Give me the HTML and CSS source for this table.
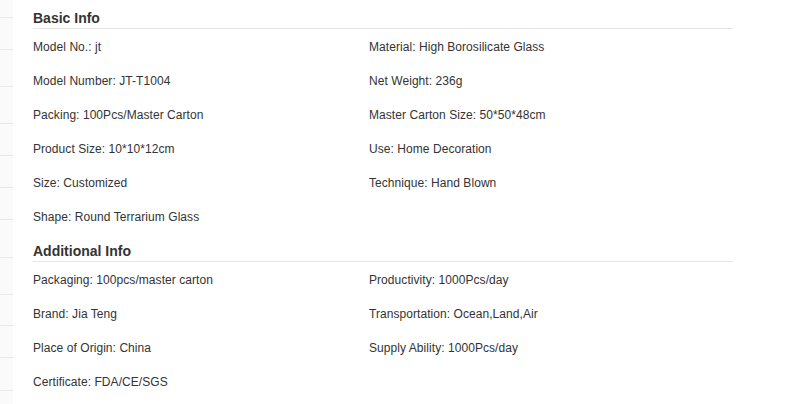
FILE: index.html
```html
<!DOCTYPE html>
<html>
<head>
<meta charset="utf-8">
<link rel="stylesheet" href="styles.css">
</head>
<body>
<div class="page">
  <ul class="side">
    <li class="s0"></li>
    <li class="s1"></li>
    <li class="s2"></li>
    <li class="s2"></li>
    <li class="s1"></li>
    <li class="s1"></li>
    <li class="s1"></li>
    <li class="s3"></li>
    <li class="s2"></li>
    <li class="s4"></li>
    <li class="s1"></li>
    <li class="s5"></li>
  </ul>
  <div class="content">
    <section class="sec">
      <h2 class="sec-title">Basic Info</h2>
      <div class="grid">
        <div class="item">Model No.: jt</div>
        <div class="item">Material: High Borosilicate Glass</div>
        <div class="item">Model Number: JT-T1004</div>
        <div class="item">Net Weight: 236g</div>
        <div class="item">Packing: 100Pcs/Master Carton</div>
        <div class="item">Master Carton Size: 50*50*48cm</div>
        <div class="item">Product Size: 10*10*12cm</div>
        <div class="item">Use: Home Decoration</div>
        <div class="item">Size: Customized</div>
        <div class="item">Technique: Hand Blown</div>
        <div class="item">Shape: Round Terrarium Glass</div>
      </div>
    </section>
    <section class="sec sec-next">
      <h2 class="sec-title">Additional Info</h2>
      <div class="grid">
        <div class="item">Packaging: 100pcs/master carton</div>
        <div class="item">Productivity: 1000Pcs/day</div>
        <div class="item">Brand: Jia Teng</div>
        <div class="item">Transportation: Ocean,Land,Air</div>
        <div class="item">Place of Origin: China</div>
        <div class="item">Supply Ability: 1000Pcs/day</div>
        <div class="item">Certificate: FDA/CE/SGS</div>
      </div>
    </section>
  </div>
</div>
</body>
</html>
```

FILE: styles.css
```css
html, body {
  margin: 0;
  padding: 0;
  background: #ffffff;
}
body {
  font-family: Arial, "Liberation Sans", sans-serif;
  color: #333333;
  width: 787px;
  height: 404px;
  overflow: hidden;
}
.page {
  display: flex;
  height: 404px;
}
.side {
  list-style: none;
  margin: 0;
  padding: 0;
  width: 13px;
  flex: 0 0 13px;
  background: #fafafa;
  display: flex;
  flex-direction: column;
}
.side li {
  border-bottom: 1px solid #e8e8e8;
  flex: 0 0 auto;
}
.side .s0 { height: 17px; }
.side .s1 { height: 31px; }
.side .s2 { height: 36px; }
.side .s3 { height: 37px; }
.side .s4 { height: 30px; }
.side .s5 { height: 32px; }
.content {
  margin-left: 20px;
  width: 700px;
  padding-top: 8px;
}
.sec-title {
  margin: 0;
  font-size: 14px;
  font-weight: bold;
  line-height: 20px;
  color: #333333;
  border-bottom: 1px solid #e5e5e5;
}
.sec-next {
  margin-top: 7px;
}
.grid {
  display: grid;
  grid-template-columns: 336px 1fr;
  margin-top: 1px;
}
.item {
  font-size: 12px;
  line-height: 34px;
  height: 34px;
  letter-spacing: 0.06px;
  white-space: nowrap;
}
```
